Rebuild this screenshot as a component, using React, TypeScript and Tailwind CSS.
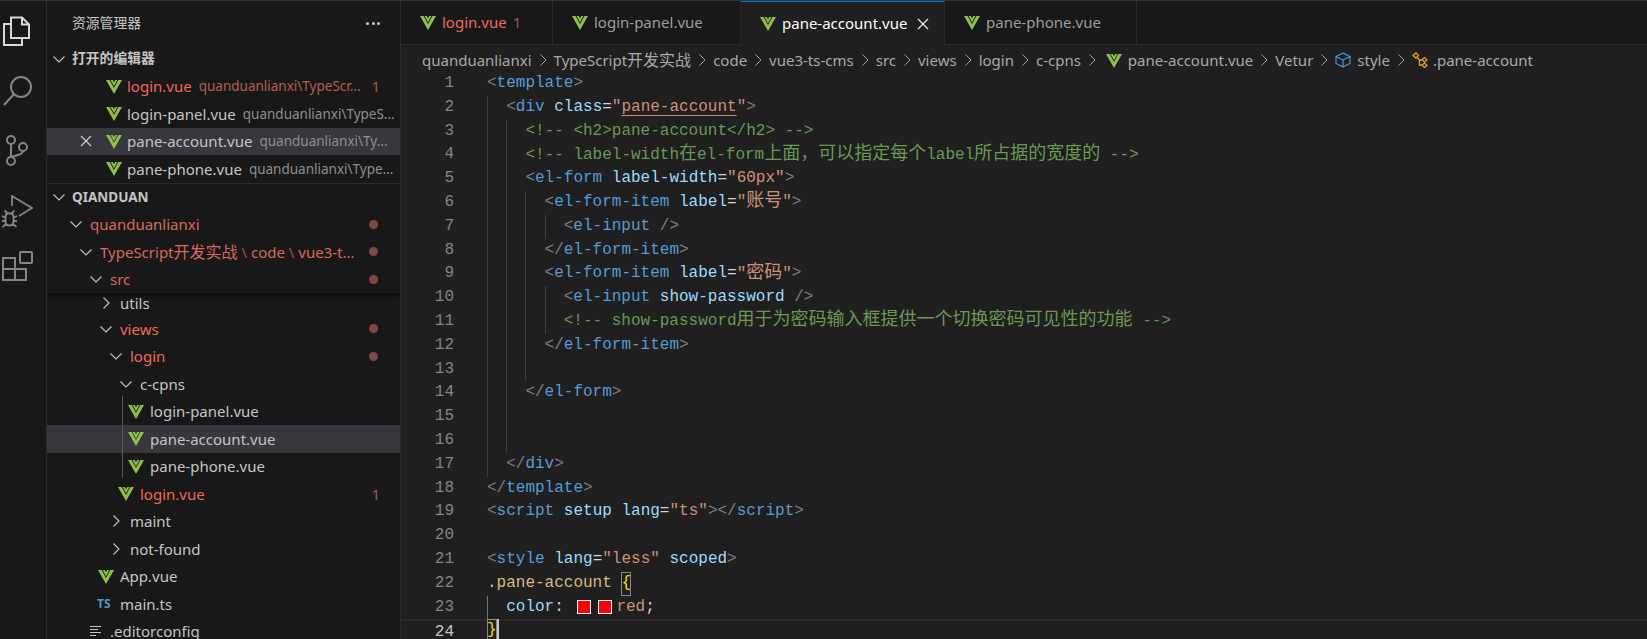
import type { ReactNode } from 'react';

const UI_FONT = "font-['Noto_Sans','Noto_Sans_CJK_SC',sans-serif]";
const CODE_FONT = "font-['Liberation_Mono','Noto_Sans_CJK_SC',monospace]";

// token colours
const P = 'text-[#808080]';
const T = 'text-[#569cd6]';
const A = 'text-[#9cdcfe]';
const E = 'text-[#d4d4d4]';
const S = 'text-[#ce9178]';
const C = 'text-[#6a9955]';

type Tok = [string, string];
type Line = { guides: number; toks: Tok[] };

const LINES: Line[] = [
  { guides: 0, toks: [[P, '<'], [T, 'template'], [P, '>']] },
  { guides: 1, toks: [[P, '<'], [T, 'div'], [E, ' '], [A, 'class'], [E, '='], [S, '"'], ['text-[#ce9178] underline underline-offset-4', 'pane-account'], [S, '"'], [P, '>']] },
  { guides: 2, toks: [[C, '<!-- <h2>pane-account</h2> -->']] },
  { guides: 2, toks: [[C, '<!-- label-width在el-form上面，可以指定每个label所占据的宽度的 -->']] },
  { guides: 2, toks: [[P, '<'], [T, 'el-form'], [E, ' '], [A, 'label-width'], [E, '='], [S, '"60px"'], [P, '>']] },
  { guides: 3, toks: [[P, '<'], [T, 'el-form-item'], [E, ' '], [A, 'label'], [E, '='], [S, '"账号"'], [P, '>']] },
  { guides: 4, toks: [[P, '<'], [T, 'el-input'], [E, ' '], [P, '/>']] },
  { guides: 3, toks: [[P, '</'], [T, 'el-form-item'], [P, '>']] },
  { guides: 3, toks: [[P, '<'], [T, 'el-form-item'], [E, ' '], [A, 'label'], [E, '='], [S, '"密码"'], [P, '>']] },
  { guides: 4, toks: [[P, '<'], [T, 'el-input'], [E, ' '], [A, 'show-password'], [E, ' '], [P, '/>']] },
  { guides: 4, toks: [[C, '<!-- show-password用于为密码输入框提供一个切换密码可见性的功能 -->']] },
  { guides: 3, toks: [[P, '</'], [T, 'el-form-item'], [P, '>']] },
  { guides: 3, toks: [] },
  { guides: 2, toks: [[P, '</'], [T, 'el-form'], [P, '>']] },
  { guides: 2, toks: [] },
  { guides: 2, toks: [] },
  { guides: 1, toks: [[P, '</'], [T, 'div'], [P, '>']] },
  { guides: 0, toks: [[P, '</'], [T, 'template'], [P, '>']] },
  { guides: 0, toks: [[P, '<'], [T, 'script'], [E, ' '], [A, 'setup'], [E, ' '], [A, 'lang'], [E, '='], [S, '"ts"'], [P, '></'], [T, 'script'], [P, '>']] },
  { guides: 0, toks: [] },
  { guides: 0, toks: [[P, '<'], [T, 'style'], [E, ' '], [A, 'lang'], [E, '='], [S, '"less"'], [E, ' '], [A, 'scoped'], [P, '>']] },
];

function VueIcon({ className = '' }: { className?: string }) {
  return (
    <svg viewBox="0 0 16 15" className={`w-4 h-[15px] shrink-0 ${className}`}>
      <polygon points="0,1 3.6,1 8,9 12.4,1 16,1 8,15" fill="#8dc149" />
      <polygon points="4.6,1 6.8,1 8,3.2 9.2,1 11.4,1 8,7.2" fill="#8dc149" />
    </svg>
  );
}

function Chevron({ open }: { open: boolean }) {
  return (
    <svg viewBox="0 0 12 12" className="w-3 h-3 shrink-0" fill="none" stroke="#c5c5c5" strokeWidth="1.1">
      {open ? <path d="M0.5 3.5 L6 9 L11.5 3.5" /> : <path d="M3.5 0.5 L9 6 L3.5 11.5" />}
    </svg>
  );
}

function Dot() {
  return <span className="block w-[9px] h-[9px] rounded-full bg-[#7c4a40] mr-[22px] shrink-0" />;
}

function ActivityBar() {
  return (
    <div className="w-[47px] shrink-0 border-r border-[#2b2b2b] bg-[#181818] flex flex-col items-start">
      <svg viewBox="0 0 28 30" className="w-7 h-[30px] ml-[2px] mt-[15px]" fill="none" stroke="#d7d7d7" strokeWidth="2">
        <path d="M9 1.5 H20 L27 8.5 V22 H9 Z M20 1.5 V8.5 H27 M9 8 H2 V29 H20 V22" />
      </svg>
      <svg viewBox="0 0 30 32" className="w-[30px] h-8 ml-[2px] mt-[28px]" fill="none" stroke="#858585" strokeWidth="2">
        <circle cx="19" cy="13" r="10" />
        <path d="M12 20 L2 31" />
      </svg>
      <svg viewBox="0 0 26 32" className="w-[26px] h-8 ml-[3px] mt-[29px]" fill="none" stroke="#858585" strokeWidth="2">
        <circle cx="8" cy="5" r="4" />
        <circle cx="8" cy="26" r="4" />
        <circle cx="20" cy="12" r="4" />
        <path d="M8 9 V22 M20 16 C20 20 13 20 8.5 22" />
      </svg>
      <svg viewBox="0 0 32 34" className="w-8 h-[34px] ml-[1px] mt-[28px]" fill="none" stroke="#858585" strokeWidth="1.8">
        <path d="M11 11 V1 L31 13 L18 21" />
        <path d="M4.5 22 C4.5 17 12.5 17 12.5 22 V26 C12.5 32 4.5 32 4.5 26 Z M6 18 L3.5 15.5 M11 18 L13.5 15.5 M1 21 L4.5 23 M16 21 L12.5 23 M1 26 H4.5 M16 26 H12.5 M1.5 32 L5 29 M15.5 32 L12 29" />
      </svg>
      <svg viewBox="0 0 32 30" className="w-8 h-[30px] ml-[1px] mt-[22px]" fill="none" stroke="#858585" strokeWidth="2">
        <path d="M2 7 H14 V29 H2 Z M2 18 H25 V29 H14" />
        <rect x="19" y="1" width="12" height="11" rx="1" />
      </svg>
    </div>
  );
}

function OpenEditor({ name, desc, red, active, badge }: { name: string; desc: string; red?: boolean; active?: boolean; badge?: string }) {
  return (
    <div className={`h-[27.5px] flex items-center ${active ? 'bg-[#37373d]' : ''}`}>
      <span className="w-[59px] pl-[33px] shrink-0">
        {active && (
          <svg viewBox="0 0 12 12" className="w-3 h-3" fill="none" stroke="#d0d0d0" strokeWidth="1.2">
            <path d="M1 1 L11 11 M11 1 L1 11" />
          </svg>
        )}
      </span>
      <VueIcon />
      <span className={`ml-[5px] ${red ? 'text-[#f0695a]' : 'text-[#c5c5c5]'}`}>{name}</span>
      <span className={`ml-[7px] text-[13.5px] truncate ${red ? 'text-[#b35f55]' : 'text-[#8f8f8f]'}`}>{desc}</span>
      {badge ? <span className="ml-auto mr-[20px] pl-2 text-[#a8554b]">{badge}</span> : null}
    </div>
  );
}

type Node = {
  x: number; // text column, in page pixels
  label: string;
  kind: 'open' | 'closed' | 'vue' | 'ts' | 'cfg';
  tone?: 'red' | 'dim';
  dot?: boolean;
  badge?: string;
  active?: boolean;
};

const TREE: Node[] = [
  { x: 120, label: 'views', kind: 'open', tone: 'red', dot: true },
  { x: 130, label: 'login', kind: 'open', tone: 'red', dot: true },
  { x: 140, label: 'c-cpns', kind: 'open' },
  { x: 150, label: 'login-panel.vue', kind: 'vue' },
  { x: 150, label: 'pane-account.vue', kind: 'vue', active: true },
  { x: 150, label: 'pane-phone.vue', kind: 'vue' },
  { x: 140, label: 'login.vue', kind: 'vue', tone: 'red', badge: '1' },
  { x: 130, label: 'maint', kind: 'closed' },
  { x: 130, label: 'not-found', kind: 'closed' },
  { x: 120, label: 'App.vue', kind: 'vue' },
  { x: 120, label: 'main.ts', kind: 'ts' },
  { x: 110, label: '.editorconfig', kind: 'cfg' },
];

function NodeIcon({ kind }: { kind: Node['kind'] }) {
  if (kind === 'open') return <Chevron open />;
  if (kind === 'closed') return <Chevron open={false} />;
  if (kind === 'vue') return <VueIcon className="-ml-[2px]" />;
  if (kind === 'ts') return <span className="-ml-[3px] text-[12px] font-bold text-[#519aba] leading-none">TS</span>;
  return (
    <svg viewBox="0 0 12 12" className="w-3 h-3" stroke="#c5c5c5" strokeWidth="1.2">
      <path d="M0 1.5 H11 M0 4.5 H8 M0 7.5 H11 M0 10.5 H6" />
    </svg>
  );
}

function TreeRow({ node }: { node: Node }) {
  const color = node.tone === 'red' ? 'text-[#f0695a]' : node.tone === 'dim' ? 'text-[#d9695f]' : 'text-[#c5c5c5]';
  return (
    <div className={`h-[27.5px] flex items-center ${node.active ? 'bg-[#37373d]' : ''}`} style={{ paddingLeft: node.x - 47 - 20 }}>
      <span className="w-5 shrink-0 flex items-center">
        <NodeIcon kind={node.kind} />
      </span>
      <span className={color}>{node.label}</span>
      {node.dot ? <span className="ml-auto"><Dot /></span> : null}
      {node.badge ? <span className="ml-auto mr-[20px] text-[#a8554b]">{node.badge}</span> : null}
    </div>
  );
}

function Sidebar() {
  return (
    <div className={`w-[354px] shrink-0 border-r border-[#2b2b2b] bg-[#181818] text-[15px] ${UI_FONT} overflow-hidden relative`}>
      <div className="h-[44px] flex items-center pl-[25px] pr-[20px] justify-between text-[13.8px] text-[#c5c5c5]">
        <span>资源管理器</span>
        <span className="flex gap-[2.5px]">
          <i className="w-[3px] h-[3px] rounded-full bg-[#c5c5c5]" />
          <i className="w-[3px] h-[3px] rounded-full bg-[#c5c5c5]" />
          <i className="w-[3px] h-[3px] rounded-full bg-[#c5c5c5]" />
        </span>
      </div>
      <div className="h-[27.5px] flex items-center pl-[6px] text-[13.8px] font-bold text-[#c5c5c5]">
        <span className="w-5"><Chevron open /></span>
        <span className="ml-[-1px]">打开的编辑器</span>
      </div>
      <OpenEditor name="login.vue" desc="quanduanlianxi\TypeScr..." red badge="1" />
      <OpenEditor name="login-panel.vue" desc="quanduanlianxi\TypeS..." />
      <OpenEditor name="pane-account.vue" desc="quanduanlianxi\Ty..." active />
      <OpenEditor name="pane-phone.vue" desc="quanduanlianxi\Type..." />
      <div className="h-[28px] flex items-center pl-[6px] border-t border-[#2b2b2b] text-[13.5px] font-bold text-[#c5c5c5]">
        <span className="w-5"><Chevron open /></span>
        <span className="ml-[-1px]">QIANDUAN</span>
      </div>
      <div className="border-b border-[#0f0f0f] shadow-[0_2px_3px_rgba(0,0,0,0.5)] relative">
        <div className="h-[27.5px] flex items-center pl-[23px] text-[#d9695f]">
          <span className="w-5"><Chevron open /></span>
          <span>quanduanlianxi</span>
          <span className="ml-auto"><Dot /></span>
        </div>
        <div className="h-[27.5px] flex items-center pl-[33px] text-[#d9695f]">
          <span className="w-5"><Chevron open /></span>
          <span>TypeScript<span className="text-[16px]">开发实战</span> <span className="text-[#8f5a52]">\</span> code <span className="text-[#8f5a52]">\</span> vue3-t...</span>
          <span className="ml-auto"><Dot /></span>
        </div>
        <div className="h-[27.5px] flex items-center pl-[43px] text-[#d9695f]">
          <span className="w-5"><Chevron open /></span>
          <span>src</span>
          <span className="ml-auto"><Dot /></span>
        </div>
      </div>
      <div className="h-[21px] pb-[3px] flex items-center pl-[53px] text-[#c5c5c5]">
        <span className="w-5"><Chevron open={false} /></span>
        <span>utils</span>
      </div>
      <div className="relative">
        {TREE.map((n) => (
          <TreeRow key={n.label + n.x} node={n} />
        ))}
        {/* indent guide under c-cpns */}
        <span className="absolute left-[75px] top-[81px] h-[82px] border-l border-[#585858]" />
      </div>
    </div>
  );
}

function Tab({ label, width, active, red, close, badge }: { label: string; width: string; active?: boolean; red?: boolean; close?: boolean; badge?: string }) {
  return (
    <div
      className={`${width} h-full shrink-0 flex items-center pl-[19px] border-r border-[#2b2b2b] ${
        active ? 'bg-[#1f1f1f] border-t border-t-[#0078d4]' : 'border-b border-b-[#2b2b2b] bg-[#181818]'
      }`}
    >
      <VueIcon />
      <span className={`ml-[6px] ${red ? 'text-[#f0695a]' : active ? 'text-white' : 'text-[#9d9d9d]'}`}>{label}</span>
      {badge ? <span className="ml-[6px] text-[#a8554b]">{badge}</span> : null}
      {close ? (
        <svg viewBox="0 0 12 12" className="w-3 h-3 ml-[10px]" fill="none" stroke="#e8e8e8" strokeWidth="1.2">
          <path d="M1 1 L11 11 M11 1 L1 11" />
        </svg>
      ) : null}
    </div>
  );
}

function Sep() {
  return (
    <svg viewBox="0 0 8 12" className="w-2 h-3 mx-[7px] shrink-0" fill="none" stroke="#a0a0a0" strokeWidth="1">
      <path d="M1.5 0.5 L7 6 L1.5 11.5" />
    </svg>
  );
}

function Breadcrumbs() {
  const parts = ['quanduanlianxi', 'code', 'vue3-ts-cms', 'src', 'views', 'login', 'c-cpns'];
  return (
    <div className={`h-[24px] mt-[3px] shrink-0 flex items-center pl-[21px] text-[15px] text-[#a9a9a9] ${UI_FONT}`}>
      {parts.map((p, i) => (
        <span key={p} className="flex items-center">
          <span>{p}</span>
          <Sep />
          {i === 0 ? (
            <>
              <span>TypeScript<span className="text-[16px]">开发实战</span></span>
              <Sep />
            </>
          ) : null}
        </span>
      ))}
      <VueIcon className="ml-[3px] mr-[6px]" />
      <span>pane-account.vue</span>
      <Sep />
      <span>Vetur</span>
      <Sep />
      <svg viewBox="0 0 16 16" className="w-4 h-4 mr-[6px]" fill="none" stroke="#4aa3f0" strokeWidth="1.1">
        <path d="M8 1 L15 4.5 V11.5 L8 15 L1 11.5 V4.5 Z M1 4.5 L8 8 L15 4.5 M8 8 V15" />
      </svg>
      <span>style</span>
      <Sep />
      <svg viewBox="0 0 16 16" className="w-4 h-4 mr-[5px]" fill="none" stroke="#ee9d28" strokeWidth="1.3">
        <path d="M1 3.5 L4 1 L6.5 3.5 L4 6 Z M10 7.5 L12.5 5.5 L15 8 L12.5 10 Z M10 13 L12.5 11 L15 13.5 L12.5 15.5 Z M5 5 L7.5 8 H11 M7.5 8 V13 H10.5" />
      </svg>
      <span>.pane-account</span>
    </div>
  );
}

// wide CJK runs sit at a larger size than the latin mono text, as in the editor's fallback font
function renderText(text: string): ReactNode[] {
  return text.split(/([\u3000-\u9fff\uff00-\uffef]+)/).map((part, i) =>
    /[\u3000-\u9fff\uff00-\uffef]/.test(part) ? (
      <span key={i} className="text-[18px]">{part}</span>
    ) : (
      part
    ),
  );
}

function Guides({ count, active }: { count: number; active?: boolean }) {
  return (
    <>
      {Array.from({ length: count }).map((_, i) => (
        <span key={i} className={`w-[19.2px] h-full shrink-0 border-l ${active ? 'border-[#707070]' : 'border-[#404040]'}`} />
      ))}
    </>
  );
}

function CodeRow({ n, guides, active, current, children }: { n: number; guides: number; active?: boolean; current?: boolean; children?: ReactNode }) {
  return (
    <div className={`h-[23.8px] shrink-0 flex leading-[23.8px] ${current ? 'border-y-2 border-[#2a2a2a]' : ''}`}>
      <span className={`w-[53px] shrink-0 text-right ${current ? 'text-[#c6c6c6]' : 'text-[#858585]'}`}>{n}</span>
      <span className="w-[33px] shrink-0" />
      <Guides count={guides} active={active} />
      <span className="whitespace-pre flex items-center">{children}</span>
    </div>
  );
}

function Swatch() {
  return <span className="w-[14px] h-[14px] bg-[#ff0000] border border-white mr-[7px] shrink-0" />;
}

function Editor() {
  return (
    <div className="flex-1 min-w-0 bg-[#1f1f1f] flex flex-col overflow-hidden">
      <div className={`h-[44px] shrink-0 flex bg-[#181818] text-[15px] ${UI_FONT}`}>
        <Tab label="login.vue" width="w-[152px]" red badge="1" />
        <Tab label="login-panel.vue" width="w-[188px]" />
        <Tab label="pane-account.vue" width="w-[204px]" active close />
        <Tab label="pane-phone.vue" width="w-[192px]" />
        <div className="flex-1 border-b border-[#2b2b2b]" />
      </div>
      <Breadcrumbs />
      <div className={`shrink-0 text-[16px] ${CODE_FONT}`}>
        {LINES.map((l, i) => (
          <CodeRow key={i} n={i + 1} guides={l.guides}>
            {l.toks.map(([cls, text], j) => (
              <span key={j} className={cls}>{renderText(text)}</span>
            ))}
          </CodeRow>
        ))}
        <CodeRow n={22} guides={0}>
          <span className="text-[#d7ba7d]">.pane-account </span>
          <span className="text-[#ffd700] outline outline-1 outline-[#888888] -outline-offset-1">{'{'}</span>
        </CodeRow>
        <CodeRow n={23} guides={1} active>
          <span className={A}>color</span>
          <span className={E}>: </span>
          <span className="w-[4px]" />
          <Swatch />
          <Swatch />
          <span className={`${S} -ml-[3px]`}>red</span>
          <span className={E}>;</span>
        </CodeRow>
        <CodeRow n={24} guides={0} current>
          <span className="relative text-[#ffd700] outline outline-1 outline-[#888888] -outline-offset-1">
            {'}'}
            <span className="absolute left-full top-0 h-full w-[2px] bg-[#c8c8c8]" />
          </span>
        </CodeRow>
      </div>
    </div>
  );
}

export default function App() {
  return (
    <div className="w-screen h-screen overflow-hidden flex border-t border-[#333333] bg-[#181818]">
      <ActivityBar />
      <Sidebar />
      <Editor />
    </div>
  );
}
